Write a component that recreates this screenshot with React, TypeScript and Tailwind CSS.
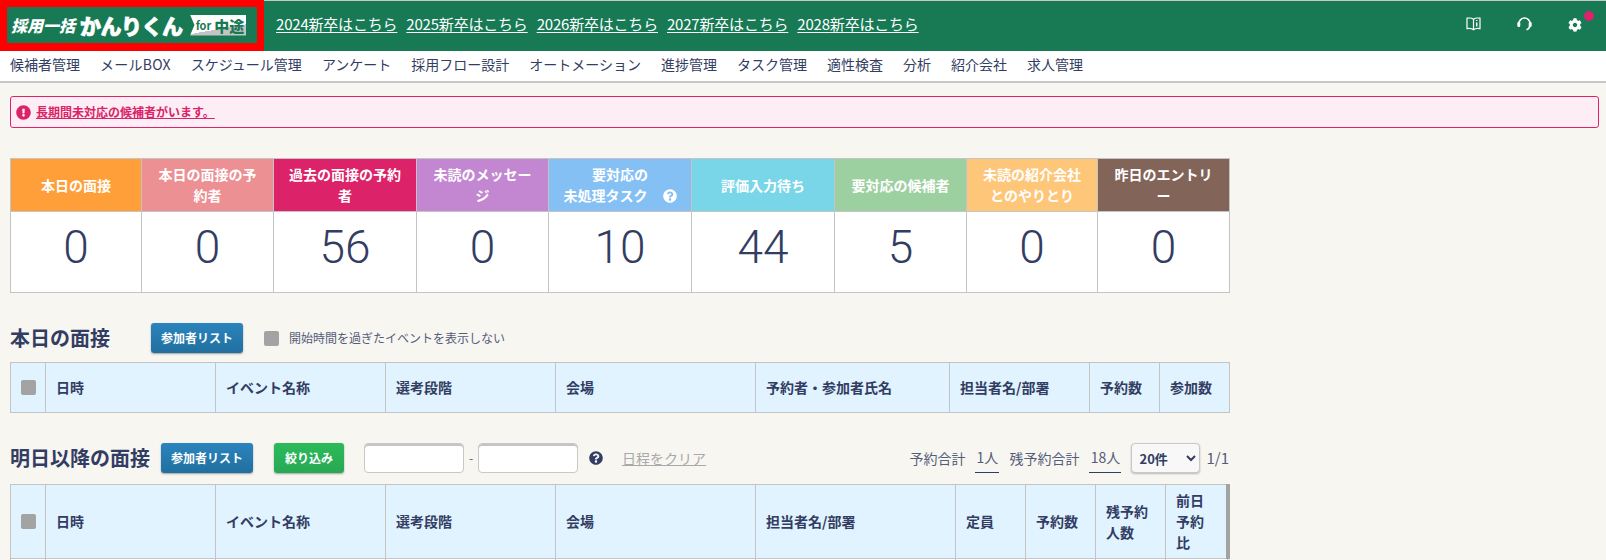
import React from 'react'
import { FaCog, FaExclamationCircle, FaQuestionCircle } from 'react-icons/fa'

const years = ['2024', '2025', '2026', '2027', '2028']

const navItems = [
  '候補者管理', 'メールBOX', 'スケジュール管理', 'アンケート', '採用フロー設計', 'オートメーション',
  '進捗管理', 'タスク管理', '適性検査', '分析', '紹介会社', '求人管理',
]

const stats = [
  { label: '本日の面接', value: '0', w: 'w-[131px]', bg: 'bg-[#ff9f3a]' },
  { label: '本日の面接の予\n約者', value: '0', w: 'w-[132px]', bg: 'bg-[#ec9093]' },
  { label: '過去の面接の予約\n者', value: '56', w: 'w-[143px]', bg: 'bg-[#dc2268]' },
  { label: '未読のメッセー\nジ', value: '0', w: 'w-[132px]', bg: 'bg-[#c387d1]' },
  { label: '要対応の\n未処理タスク', value: '10', w: 'w-[143px]', bg: 'bg-[#85c0f5]', help: true },
  { label: '評価入力待ち', value: '44', w: 'w-[143px]', bg: 'bg-[#79d6e8]' },
  { label: '要対応の候補者', value: '5', w: 'w-[132px]', bg: 'bg-[#9dd0a0]' },
  { label: '未読の紹介会社\nとのやりとり', value: '0', w: 'w-[131px]', bg: 'bg-[#fec679]' },
  { label: '昨日のエントリ\nー', value: '0', w: 'w-[132px]', bg: 'bg-[#826459]' },
]

const todayCols = [
  { label: '日時', w: 'w-[170px]' },
  { label: 'イベント名称', w: 'w-[170px]' },
  { label: '選考段階', w: 'w-[170px]' },
  { label: '会場', w: 'w-[200px]' },
  { label: '予約者・参加者氏名', w: 'w-[194px]' },
  { label: '担当者名/部署', w: 'w-[140px]' },
  { label: '予約数', w: 'w-[70px]' },
  { label: '参加数', w: 'w-[70px]' },
]

const nextCols = [
  { label: '日時', w: 'w-[170px]' },
  { label: 'イベント名称', w: 'w-[170px]' },
  { label: '選考段階', w: 'w-[170px]' },
  { label: '会場', w: 'w-[200px]' },
  { label: '担当者名/部署', w: 'w-[200px]' },
  { label: '定員', w: 'w-[70px]' },
  { label: '予約数', w: 'w-[70px]' },
  { label: '残予約\n人数', w: 'w-[70px]' },
  { label: '前日\n予約\n比', w: 'w-[62px]', last: true },
]

function Logo() {
  return (
    <div className="flex h-[51px] w-[264px] shrink-0 items-center border-x-[7px] border-t-[7px] border-b-[8px] border-[#ff0000] bg-[#177a55] pl-[4px]">
      <span className="w-[69px] whitespace-nowrap text-[16px] leading-none font-black text-white italic">採用一括</span>
      <span className="w-[110px] whitespace-nowrap text-[21px] leading-none font-black tracking-[-0.5px] text-white [-webkit-text-stroke:0.7px_white]">かんりくん</span>
      <span className="flex h-[21px] w-[56px] items-center justify-center gap-[3px] bg-[linear-gradient(170deg,#ffffff_62%,#c4c4c4_62%)] pl-[4px] text-[#177a55] [clip-path:polygon(0_0,100%_0,100%_100%,0_100%,8%_50%)]">
        <span className="text-[11px] leading-none font-bold">for</span>
        <span className="text-[15px] leading-none font-black">中途</span>
      </span>
    </div>
  )
}

function BookIcon() {
  return (
    <svg width="15" height="14" viewBox="0 0 15 14" fill="none" stroke="white" strokeWidth="1.2">
      <path d="M7.5 2.2C6 1 3.5 .8 1 1.2v10.4c2.5-.4 5-.2 6.5 1.2 1.500-1.400 4-1.600 6.500-1.200V1.200C11.500 .8 9 1 7.500 2.200Z" />
      <path d="M7.500 2.200v10.600" />
      <path d="M10.700 3v1M10.700 5.500v4" strokeWidth="1.500" />
    </svg>
  )
}

function HeadsetIcon() {
  return (
    <svg width="15" height="14" viewBox="0 0 15 14" fill="none" stroke="white">
      <path d="M2 7.500V6.500a5.500 5.500 0 0 1 11 0v1" strokeWidth="1.600" />
      <path d="M1.800 6.200v2.400M13.200 6.200v2.400" strokeWidth="3" strokeLinecap="round" />
      <path d="M12.800 8.500c0 2.300-1.300 3.500-3.300 4.300" strokeWidth="1.600" />
    </svg>
  )
}

function Check() {
  return <span className="inline-block h-[15px] w-[15px] rounded-[2px] bg-[#a3a3a3]" />
}

function ListButton() {
  return (
    <button className="h-[30px] w-[92px] rounded-[3px] bg-[linear-gradient(#2b84bd,#216f9f)] text-[12px] font-bold text-white shadow-[0_1px_2px_rgba(0,0,0,0.35)]">
      参加者リスト
    </button>
  )
}

function HeadTable({ cols, height, width, rows }: { cols: { label: string; w: string; last?: boolean }[]; height: string; width: string; rows?: boolean }) {
  return (
    <table className={`${width} table-fixed border-collapse bg-[#e0f3fe] text-[14px] font-bold text-[#333d63]`}>
      <thead>
        <tr className={height}>
          <th className="w-[35px] border border-[#c4c4c4] pt-[4px] text-center">
            <Check />
          </th>
          {cols.map((c) => (
            <th
              key={c.label}
              className={`${c.w} ${c.last ? 'border-y border-l border-r-4 border-y-[#c4c4c4] border-l-[#c4c4c4] border-r-[#a3a3a3]' : 'border border-[#c4c4c4]'} whitespace-pre-line px-[10px] text-left leading-[21px] font-bold`}
            >
              {c.label}
            </th>
          ))}
        </tr>
      </thead>
      {rows && (
        <tbody>
          <tr className="h-[40px] bg-white">
            <td className="border border-[#c4c4c4]" />
            {cols.map((c) => (
              <td key={c.label} className="border border-[#c4c4c4]" />
            ))}
          </tr>
        </tbody>
      )}
    </table>
  )
}

export default function App() {
  return (
    <div className="h-[560px] overflow-hidden bg-[#f7f6f1] font-['Noto_Sans_CJK_JP','Noto_Sans',sans-serif] text-[#333d63]">
      <header className="flex h-[51px] bg-[#177a55]">
        <Logo />
        <div className="flex flex-1 items-center border-t border-[#c8c8c8] pb-[4px] pl-[12px]">
          <div className="flex gap-[9px]">
            {years.map((y) => (
              <a key={y} className="text-[15px] tracking-[-0.2px] whitespace-nowrap text-white underline underline-offset-2">
                {y}新卒はこちら
              </a>
            ))}
          </div>
          <div className="ml-auto flex items-center gap-[36px] pr-[24px]">
            <BookIcon />
            <HeadsetIcon />
            <span className="relative mt-[2px]">
              <FaCog className="text-[14px] text-white" />
              <span className="absolute top-[-7px] left-[16px] h-[10px] w-[10px] rounded-full bg-[#dc2268]" />
            </span>
          </div>
        </div>
      </header>

      <nav className="flex h-[32px] items-start gap-[20px] border-b-2 border-[#c8c8c8] bg-white pt-[2px] pl-[10px] text-[14px] leading-[22px] text-[#333d63]">
        {navItems.map((n) => (
          <a key={n} className={n === 'メールBOX' ? 'tracking-[0.25px]' : ''}>
            {n}
          </a>
        ))}
      </nav>

      <div className="mx-[10px] mt-[13px] mr-[7px] flex h-[32px] items-center gap-[5px] rounded-[3px] border border-[#dc2268] bg-[#fdeef5] pl-[5px] text-[12px] font-bold text-[#dc2268]">
        <FaExclamationCircle className="text-[15px]" />
        <a className="underline">長期間未対応の候補者がいます。</a>
      </div>

      <div className="w-[1229px] pl-[10px]">
        <table className="mt-[30px] w-[1219px] table-fixed border-collapse bg-white">
          <thead>
            <tr className="h-[53px]">
              {stats.map((s) => (
                <th
                  key={s.label}
                  className={`${s.w} ${s.bg} border border-[#c4c4c4] whitespace-pre-line text-center text-[14px] leading-[21px] font-bold text-white`}
                >
                  {s.label}
                  {s.help && <FaQuestionCircle className="ml-[15px] inline-block align-[-2px] text-[14px] text-white" />}
                </th>
              ))}
            </tr>
          </thead>
          <tbody>
            <tr className="h-[81px]">
              {stats.map((s) => (
                <td key={s.label} className="border border-[#c4c4c4] pb-[11px] text-center font-['Roboto',sans-serif] text-[46px] leading-none font-light text-[#333d63]">
                  {s.value}
                </td>
              ))}
            </tr>
          </tbody>
        </table>

        <div className="mt-[30px] flex h-[30px] items-center">
          <h2 className="w-[141px] text-[20px] font-bold">本日の面接</h2>
          <ListButton />
          <label className="ml-[21px] flex items-center gap-[10px] text-[12px] text-[#555d7a]">
            <Check />
            開始時間を過ぎたイベントを表示しない
          </label>
        </div>
        <div className="mt-[9px]">
          <HeadTable cols={todayCols} height="h-[50px]" width="w-[1219px]" />
        </div>

        <div className="mt-[30px] flex h-[30px] items-center">
          <h2 className="w-[151px] text-[20px] font-bold whitespace-nowrap">明日以降の面接</h2>
          <ListButton />
          <button className="ml-[21px] h-[30px] w-[70px] rounded-[3px] bg-[linear-gradient(#2cba5b,#28a853)] text-[12px] font-bold text-white shadow-[0_1px_2px_rgba(0,0,0,0.35)]">
            絞り込み
          </button>
          <input className="ml-[20px] h-[30px] w-[100px] rounded-[4px] border border-[#c8c8c8] bg-white shadow-[inset_0_2px_0_#c4c4c4]" />
          <span className="w-[14px] text-center text-[12px] text-[#555d7a]">-</span>
          <input className="h-[30px] w-[100px] rounded-[4px] border border-[#c8c8c8] bg-white shadow-[inset_0_2px_0_#c4c4c4]" />
          <FaQuestionCircle className="ml-[11px] text-[14px] text-[#333d63]" />
          <a className="ml-[19px] text-[14px] text-[#a9a9a9] underline">日程をクリア</a>
          <div className="ml-auto flex h-[30px] items-center text-[14px] text-[#555d7a]">
            <span>予約合計</span>
            <span className="ml-[10px] flex h-[30px] w-[24px] items-center justify-center border-b border-[#333d63]">1人</span>
            <span className="ml-[10px]">残予約合計</span>
            <span className="ml-[10px] flex h-[30px] w-[32px] items-center justify-center border-b border-[#333d63]">18人</span>
            <select className="ml-[10px] h-[30px] w-[69px] rounded-[4px] border border-[#c8c8c8] bg-[#f8f8f8] pl-[3px] text-[13px] font-bold text-[#333d63] shadow-[0_1px_2px_rgba(0,0,0,0.25)]">
              <option>20件</option>
            </select>
            <span className="ml-[6px] text-[15px]">1/1</span>
          </div>
        </div>
        <div className="mt-[11px]">
          <HeadTable cols={nextCols} height="h-[74px]" width="w-[1217px]" rows />
        </div>
      </div>
    </div>
  )
}
